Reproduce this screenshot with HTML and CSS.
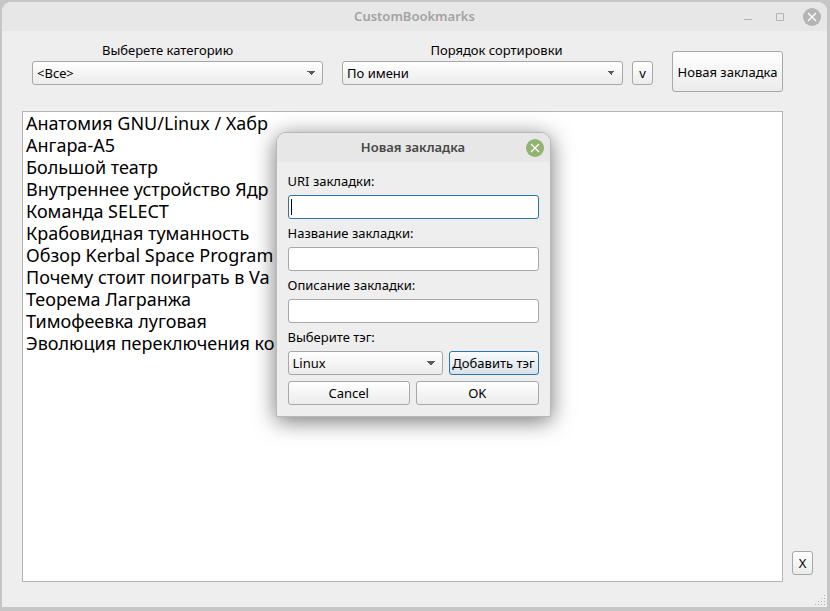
FILE: index.html
```html
<!DOCTYPE html>
<html lang="ru">
<head>
<meta charset="utf-8">
<title>CustomBookmarks</title>
<link rel="stylesheet" href="styles.css">
</head>
<body>
<main class="window">
  <header class="titlebar">
    <h1 class="title">CustomBookmarks</h1>
    <div class="controls">
      <button class="control" type="button" aria-label="Minimize"><svg width="18" height="18" viewBox="0 0 18 18"><path d="M5 11.5h8" stroke="#b4b4b4" fill="none"/></svg></button>
      <button class="control" type="button" aria-label="Maximize"><svg width="18" height="18" viewBox="0 0 18 18"><path d="M5.500 5.500h7v7h-7z" stroke="#b4b4b4" fill="none"/></svg></button>
      <button class="control" type="button" aria-label="Close"><svg width="18" height="18" viewBox="0 0 18 18"><circle cx="9" cy="9" r="9" fill="#b4b4b4"/><path d="M5 5l8 8m0-8l-8 8" stroke="#fff" stroke-width="1.300" fill="none"/></svg></button>
    </div>
  </header>
  <div class="content">
    <div class="toolbar">
      <div class="field field-category">
        <label class="caption caption-category" for="category">Выберете категорию</label>
        <select class="box combo" id="category"><option>&lt;Все&gt;</option></select>
      </div>
      <div class="field field-sort">
        <label class="caption caption-sort" for="sort">Порядок сортировки</label>
        <select class="box combo" id="sort"><option>По имени</option></select>
      </div>
      <button class="box small" type="button">v</button>
      <button class="box create" type="button">Новая закладка</button>
    </div>
    <ul class="bookmarks">
      <li>Анатомия GNU/Linux / Хабр</li>
      <li>Ангара-А5</li>
      <li>Большой театр</li>
      <li>Внутреннее устройство Ядр</li>
      <li>Команда SELECT</li>
      <li>Крабовидная туманность</li>
      <li>Обзор Kerbal Space Program</li>
      <li>Почему стоит поиграть в Va</li>
      <li>Теорема Лагранжа</li>
      <li>Тимофеевка луговая</li>
      <li>Эволюция переключения ко</li>
    </ul>
    <button class="box small remove" type="button">X</button>
  </div>
  <svg class="grip" width="12" height="12" viewBox="0 0 12 12" fill="#b4b4b4"><path d="M10 1h1v1h-1zM7 4h1v1h-1zM10 4h1v1h-1zM4 7h1v1h-1zM7 7h1v1h-1zM10 7h1v1h-1zM1 10h1v1h-1zM4 10h1v1h-1zM7 10h1v1h-1zM10 10h1v1h-1z"/></svg>

  <section class="dialog" role="dialog" aria-labelledby="dialog-title">
    <header class="titlebar">
      <h2 class="title dialog-title" id="dialog-title">Новая закладка</h2>
      <div class="controls">
        <button class="control" type="button" aria-label="Close"><svg width="18" height="18" viewBox="0 0 18 18"><circle cx="9" cy="9" r="9" fill="#92b372"/><path d="M5 5l8 8m0-8l-8 8" stroke="#fff" stroke-width="1.300" fill="none"/></svg></button>
      </div>
    </header>
    <form class="form">
      <label for="uri">URI закладки:</label>
      <input class="box text active" id="uri" type="text" autofocus>
      <label for="name">Название закладки:</label>
      <input class="box text" id="name" type="text">
      <label for="description">Описание закладки:</label>
      <input class="box text" id="description" type="text">
      <label for="tag">Выберите тэг:</label>
      <div class="row">
        <select class="box combo" id="tag"><option>Linux</option></select>
        <button class="box default" type="button">Добавить тэг</button>
      </div>
      <div class="row">
        <button class="box half" type="button">Cancel</button>
        <button class="box half" type="button">OK</button>
      </div>
    </form>
  </section>
</main>
</body>
</html>
```
FILE: styles.css
```css
* { box-sizing: border-box; }

body {
  margin: 0;
  min-height: 100vh;
  display: flex;
  padding: 2px 3px 4px 2px;
  background: #c6c6c6;
  font: 13px/16px "Noto Sans", sans-serif;
  color: #000;
}

.window {
  position: relative;
  flex: 1;
  display: flex;
  flex-direction: column;
  background: #eee;
  border-radius: 9px 9px 0 0;
}

.titlebar {
  display: grid;
  grid-template-columns: 1fr auto 1fr;
  align-items: center;
  height: 29px;
  background: #e7e7e7;
  border-radius: 9px 9px 0 0;
}

.title {
  grid-column: 2;
  margin: 0;
  padding-bottom: 2px;
  font-size: 13px;
  font-weight: 600;
  line-height: 16px;
  color: #a2a2a2;
}

.controls {
  display: flex;
  justify-content: flex-end;
  gap: 14px;
  padding-right: 6px;
}

.control {
  display: block;
  width: 18px;
  height: 18px;
  padding: 0;
  border: 0;
  background: none;
}

.control svg { display: block; }

.content {
  flex: 1;
  display: grid;
  grid-template-columns: 1fr 21px;
  grid-template-rows: auto 1fr;
  column-gap: 9px;
  row-gap: 19px;
  padding: 11px 14px 25px 20px;
}

.toolbar {
  grid-column: 1;
  display: flex;
  align-items: flex-end;
  padding-left: 10px;
}

.field {
  display: flex;
  flex-direction: column;
  gap: 3px;
  margin: 0 19px 7px 0;
}

.field-category { flex: 291; }
.field-sort { flex: 281; margin-right: 9px; }

.caption { text-align: center; }
.caption-category { padding-right: 20px; }
.caption-sort { padding-left: 28px; }

.box {
  height: 24px;
  margin: 0;
  padding: 0 4px;
  border: 1px solid #a8a8a8;
  border-radius: 3px;
  background: linear-gradient(#fff, #ebebeb);
  font: inherit;
  color: #000;
  min-width: 0;
}

.combo {
  appearance: none;
  width: 100%;
  background:
    conic-gradient(from -45deg at 50% 100%, #5c5c5c 90deg, transparent 0) right 7px center / 8px 4px no-repeat,
    linear-gradient(#fff, #ebebeb);
}

/* Down arrow drawn as the top wedge of a conic gradient */

.small {
  width: 21px;
  padding: 0;
}

.toolbar .small { margin: 0 19px 7px 0; }

.create {
  width: 111px;
  height: 41px;
  padding: 0;
  white-space: nowrap;
}

.bookmarks {
  grid-column: 1;
  min-width: 0;
  margin: 0;
  padding: 0 3px;
  list-style: none;
  background: #fff;
  border: 1px solid #b4b4b4;
  font-size: 18px;
  line-height: 22px;
  white-space: nowrap;
}

.remove {
  align-self: end;
  margin-bottom: 7px;
}

.grip {
  position: absolute;
  right: 1px;
  bottom: 1px;
}

.dialog {
  position: absolute;
  top: 130px;
  left: calc(50% - 139px);
  width: 275px;
  background: #eee;
  border: 1px solid #b8b8b8;
  border-radius: 10px 10px 0 0;
  box-shadow: 0 4px 22px rgba(0, 0, 0, 0.55);
}

.dialog-title { color: #484848; }

.form {
  display: flex;
  flex-direction: column;
  gap: 6px;
  padding: 11px;
}

.text { background: #fff; padding: 0 2px; }

.text:focus { outline: none; }

/* Focused field with its text caret */
.active {
  border-color: #2a76a8;
  caret-color: transparent;
  background: linear-gradient(#000, #000) 2px center / 1px 16px no-repeat #fff;
}

.row {
  display: flex;
  gap: 6px;
}

.row .combo { flex: 1; }

.default {
  flex: none;
  width: 90px;
  padding: 0;
  border-color: #2a76a8;
  background: linear-gradient(#fafcfd, #d9e1e8);
  white-space: nowrap;
}

.half { flex: 1; }
```
